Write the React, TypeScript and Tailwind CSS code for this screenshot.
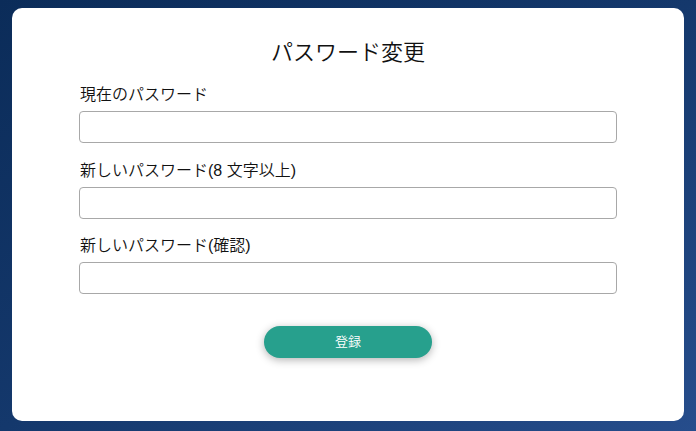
import React from 'react';

const fields = [
  { id: 'current', label: '現在のパスワード' },
  { id: 'next', label: '新しいパスワード(8 文字以上)' },
  { id: 'confirm', label: '新しいパスワード(確認)' },
];

export default function App() {
  return (
    <div
      className="min-h-screen w-full bg-gradient-to-br from-[#0b2c59] via-[#14386c] to-[#264d8c] px-3 pt-2 pb-[10px]"
      style={{ fontFamily: '"Liberation Sans", "Noto Sans CJK JP", sans-serif' }}
    >
      <div className="bg-white rounded-[10px] h-[413px] pt-[28px] px-[67px]">
        <h1 className="text-center text-[22px] font-[350] leading-[33px] text-[#111] mb-[14px]">
          パスワード変更
        </h1>
        <form className="flex flex-col gap-[15.5px]" onSubmit={e => e.preventDefault()}>
          {fields.map(f => (
            <div key={f.id} className="flex flex-col">
              <label htmlFor={f.id} className="text-[16px] font-[350] leading-6 text-[#111] pl-px mb-1">
                {f.label}
              </label>
              <input
                id={f.id}
                type="password"
                className="h-8 w-full rounded border border-[#a8a8a8] px-2 outline-none"
              />
            </div>
          ))}
          <div className="flex justify-center pt-[16px]">
            <button
              type="submit"
              className="w-[168px] h-8 rounded-full bg-[#27a08d] text-white text-[13px] font-[350] shadow-[0_2px_8px_rgba(0,0,0,0.3)]"
            >
              登録
            </button>
          </div>
        </form>
      </div>
    </div>
  );
}
